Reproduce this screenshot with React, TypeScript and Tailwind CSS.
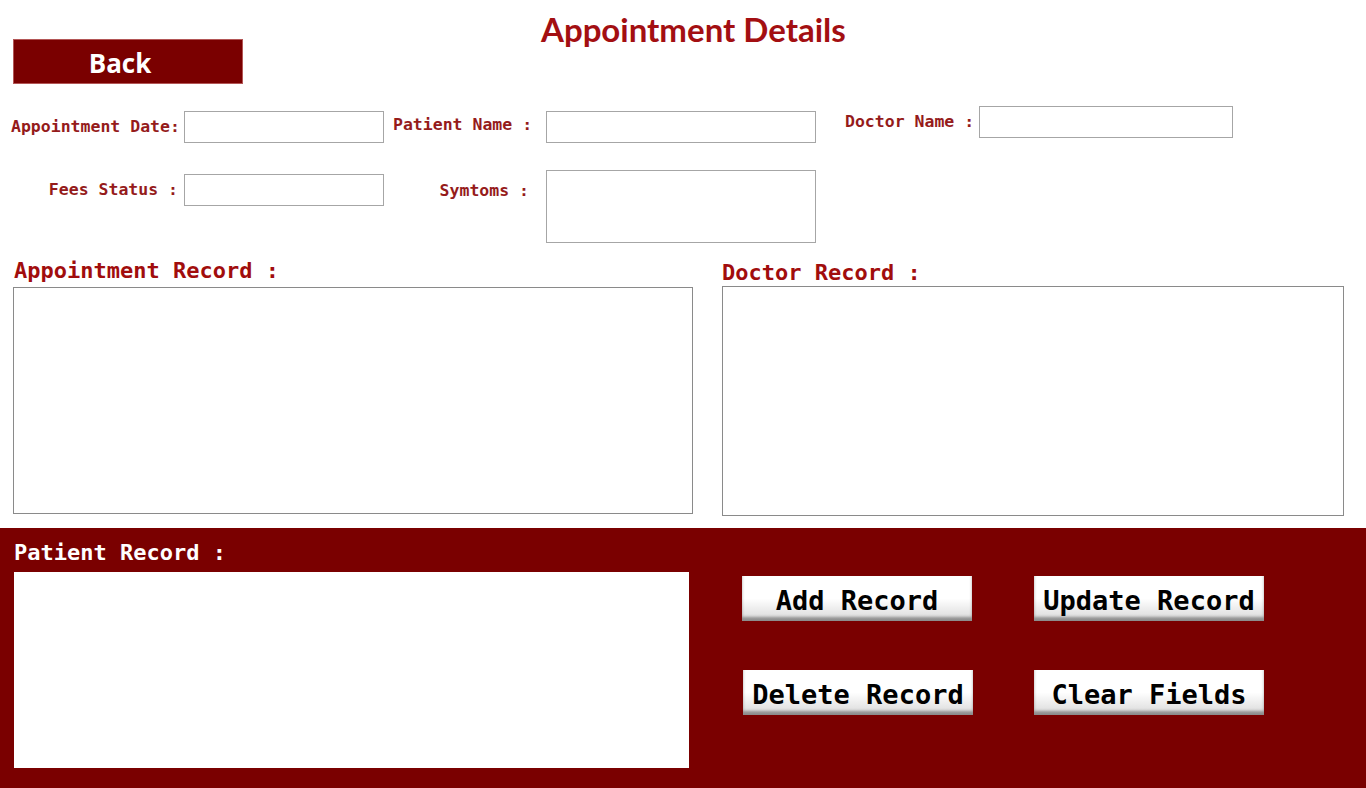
// Appointment details form
const mono = { fontFamily: '"DejaVu Sans Mono", "Liberation Mono", monospace' };

function Label({ text, className }: { text: string; className: string }) {
  return (
    <div
      className={`flex h-[32px] items-center text-[16.5px] font-bold text-[#951b1b] whitespace-pre ${className}`}
      style={mono}
    >
      {text}
    </div>
  );
}

function Field({ className }: { className: string }) {
  return <div className={`border border-[#a6a6a6] bg-white ${className}`} />;
}

function ActionButton({ label, extra = '' }: { label: string; extra?: string }) {
  return (
    <button
      className={`flex h-[45px] w-[230px] items-center justify-center whitespace-pre bg-gradient-to-b from-white via-white to-[#d8d8d8] pt-[6px] text-[27px] font-bold text-black shadow-[inset_0_-4px_3px_rgba(0,0,0,0.35)] ${extra}`}
      style={mono}
    >
      {label}
    </button>
  );
}

export default function App() {
  return (
    <div className="flex h-[788px] w-[1366px] flex-col overflow-hidden bg-white">
      {/* header */}
      <div className="flex items-start">
        <button
          className="ml-[13px] mt-[39px] flex h-[45px] w-[230px] items-center justify-center border border-[#b35656] bg-[#7a0000] pr-[16px] pt-[3px] text-[26px] font-bold text-white"
          style={{ fontFamily: '"Open Sans", "DejaVu Sans", sans-serif' }}
        >
          Back
        </button>
        <h1
          className="ml-[298px] mt-[9px] text-[33px] font-bold leading-[40px] text-[#a30f12]"
          style={{ fontFamily: 'Lato, "Open Sans", sans-serif' }}
        >
          Appointment Details
        </h1>
      </div>

      {/* form row 1 */}
      <div className="mt-[22px] flex items-start">
        <Label text="Appointment Date:" className="ml-[11px] mt-[5px] w-[173px]" />
        <Field className="mt-[5px] h-[32px] w-[200px]" />
        <Label text="Patient Name :" className="ml-[9px] mt-[3px] w-[153px]" />
        <Field className="mt-[5px] h-[32px] w-[270px]" />
        <Label text="Doctor Name :" className="ml-[29px] w-[134px]" />
        <Field className="h-[32px] w-[254px] border-[#808080]" />
      </div>

      {/* form row 2 */}
      <div className="mt-[27px] flex items-start">
        <Label text="Fees Status :" className="mt-[4px] w-[184px] justify-end pr-[6px]" />
        <Field className="mt-[4px] h-[32px] w-[200px] border-[#8a8a8a]" />
        <Label text="Symtoms :" className="mt-[5px] w-[162px] justify-end pr-[17px]" />
        <Field className="h-[73px] w-[270px] border-[#8a8a8a]" />
      </div>

      {/* record lists */}
      <div className="mt-[15px] flex items-start">
        <div className="ml-[13px] flex w-[680px] flex-col">
          <div
            className="flex h-[29px] items-center pb-[4px] pl-[1px] text-[22px] font-bold text-[#a10d0d]"
            style={mono}
          >
            Appointment Record :
          </div>
          <div className="h-[227px] border border-[#8a8a8a]" />
        </div>
        <div className="ml-[29px] flex w-[622px] flex-col">
          <div
            className="flex h-[28px] items-center text-[22px] font-bold text-[#a10d0d]"
            style={mono}
          >
            Doctor Record :
          </div>
          <div className="h-[230px] border border-[#8a8a8a]" />
        </div>
      </div>

      {/* patient record panel */}
      <div className="mt-auto flex h-[260px] bg-[#7a0000]">
        <div className="ml-[14px] flex flex-col">
          <div
            className="mt-[12px] flex h-[24px] items-center text-[22px] font-bold text-white"
            style={mono}
          >
            Patient Record :
          </div>
          <div className="mt-[8px] h-[196px] w-[675px] bg-white" />
        </div>
        <div className="ml-[53px] mt-[48px] grid grid-cols-[230px_230px] gap-x-[61px] gap-y-[49px] self-start">
          <ActionButton label="Add Record" extra="shadow-[inset_0_-4px_3px_rgba(0,0,0,0.35),0_0_6px_rgba(255,255,255,0.7)]" />
          <ActionButton label="Update Record" extra="ml-[1px]" />
          <ActionButton label="Delete Record" extra="ml-[1px]" />
          <ActionButton label="Clear Fields" extra="ml-[1px]" />
        </div>
      </div>
    </div>
  );
}
